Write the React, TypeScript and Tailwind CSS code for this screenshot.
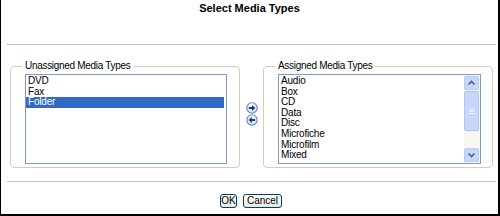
import React from 'react';

const font = { fontFamily: '"Liberation Sans", Arial, sans-serif' };

const unassigned = ['DVD', 'Fax', 'Folder'];
const assigned = ['Audio', 'Box', 'CD', 'Data', 'Disc', 'Microfiche', 'Microfilm', 'Mixed'];

const Chevron = ({ up }: { up?: boolean }) => (
  <svg width="9" height="6" viewBox="0 0 9 6">
    <path
      d={up ? 'M1.5 4.5 L4.5 1.5 L7.5 4.5' : 'M1.5 1.5 L4.5 4.5 L7.5 1.5'}
      fill="none"
      stroke="#4d6185"
      strokeWidth="1.6"
    />
  </svg>
);

const ArrowCircle = ({ left }: { left?: boolean }) => (
  <svg width="12" height="12" viewBox="0 0 12 12">
    <defs>
      <linearGradient id={left ? 'gl' : 'gr'} x1="0" y1="0" x2="0" y2="1">
        <stop offset="0" stopColor="#ffffff" />
        <stop offset="1" stopColor="#d6e2f5" />
      </linearGradient>
    </defs>
    <circle cx="6" cy="6" r="5.2" fill={`url(#${left ? 'gl' : 'gr'})`} stroke="#5b84c4" strokeWidth="1.1" />
    {left ? (
      <path d="M2.6 6 L6 3 L6 4.9 L9.2 4.9 L9.2 7.1 L6 7.1 L6 9 Z" fill="#1b3a8c" />
    ) : (
      <path d="M9.4 6 L6 3 L6 4.9 L2.8 4.9 L2.8 7.1 L6 7.1 L6 9 Z" fill="#1b3a8c" />
    )}
  </svg>
);

const GroupBox = ({ title, children }: { title: string; children: React.ReactNode }) => (
  <div className="relative w-[230px] h-[102px] border border-[#d0d0bf] rounded-[4px] pt-[7px] pl-[14px]">
    <span className="absolute -top-[7px] left-[11px] bg-white px-[3px] text-[10px] leading-[12px] tracking-[-0.3px] text-black">
      {title}
    </span>
    {children}
  </div>
);

export default function App() {
  return (
    <div
      className="w-[500px] h-[216px] bg-white border-l border-r-2 border-b-2 border-black flex flex-col text-black"
      style={font}
    >
      {/* Title */}
      <div className="h-[44px] pt-[2px] text-center text-[11px] leading-[13px] font-bold">Select Media Types</div>
      <div className="h-px ml-[6px] mr-[2px] bg-[#c4c0b0]" />

      {/* Lists */}
      <div className="mt-[21px] pl-[9px] flex">
        <GroupBox title="Unassigned Media Types">
          <div className="w-[202px] h-[90px] border border-[#7f9db9] bg-white pt-px pr-[2px]">
            {unassigned.map((item, i) => (
              <div
                key={item}
                className={`h-[10.6px] leading-[10.6px] text-[10px] pl-[2px] tracking-[-0.2px] ${
                  i === 2 ? 'bg-[#316ac5] text-white' : ''
                }`}
              >
                {item}
              </div>
            ))}
          </div>
        </GroupBox>

        <div className="w-[23px] flex flex-col items-center pt-[36px] gap-[0px]">
          <ArrowCircle />
          <ArrowCircle left />
        </div>

        <GroupBox title="Assigned Media Types">
          <div className="w-[203px] h-[90px] border border-[#7f9db9] bg-white flex">
            <div className="flex-1 pt-px">
              {assigned.map((item) => (
                <div key={item} className="h-[10.6px] leading-[10.6px] text-[10px] pl-[2px] tracking-[-0.2px]">
                  {item}
                </div>
              ))}
            </div>
            <div className="w-[16px] bg-[#f7f7f2] flex flex-col py-px pr-px">
              <div className="h-[14px] rounded-[2px] border border-[#b7cbf5] bg-[#c7d7fc] flex items-center justify-center">
                <Chevron up />
              </div>
              <div className="mt-px h-[40px] rounded-[2px] border border-[#b0c6f6] bg-[#c6d6fc] flex flex-col items-center justify-center gap-px">
                <div className="w-[6px] h-px bg-[#eef3ff]" />
                <div className="w-[6px] h-px bg-[#eef3ff]" />
                <div className="w-[6px] h-px bg-[#eef3ff]" />
              </div>
              <div className="flex-1" />
              <div className="h-[14px] rounded-[2px] border border-[#b7cbf5] bg-[#c7d7fc] flex items-center justify-center">
                <Chevron />
              </div>
            </div>
          </div>
        </GroupBox>
      </div>

      <div className="mt-[13px] h-px ml-[6px] mr-[2px] bg-[#c4c0b0]" />

      {/* Buttons */}
      <div className="mt-[12px] flex justify-center gap-[6px] pl-[3px]">
        <button className="w-[17px] h-[14px] border border-[#003c74] rounded-[3px] bg-gradient-to-b from-white to-[#ece9d8] text-[10px] leading-[12px] text-black p-0">
          OK
        </button>
        <button className="w-[39px] h-[14px] border border-[#003c74] rounded-[3px] bg-gradient-to-b from-white to-[#ece9d8] text-[10px] leading-[12px] text-black p-0">
          Cancel
        </button>
      </div>
    </div>
  );
}
